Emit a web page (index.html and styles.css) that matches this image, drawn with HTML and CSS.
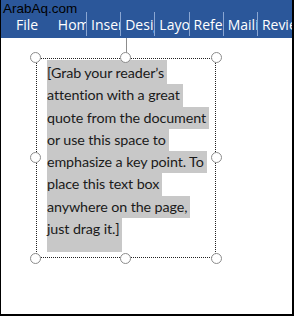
FILE: index.html
```html
<!DOCTYPE html>
<html lang="en">
<head>
    <meta charset="UTF-8">
    <title>Text box</title>
<link rel="stylesheet" href="styles.css">
</head>
<body>
    <div class="frame">
        <!-- Ribbon tabs -->
        <header class="ribbon">
            <div class="watermark">ArabAq.com</div>
            <nav class="tabs">
                <div class="tab file">File</div>
                <div class="tab home">Home</div>
                <div class="tab sep">Insert</div>
                <div class="tab sep">Design</div>
                <div class="tab sep">Layout</div>
                <div class="tab sep">References</div>
                <div class="tab sep">Mailings</div>
                <div class="tab sep last">Review</div>
            </nav>
        </header>
        <!-- Document page -->
        <main class="page">
            <div class="textbox">
                <div class="rotate-line"></div>
                <div class="quote">
                    <span class="start">[Grab your reader’s</span>
                    <span>attention with a great</span>
                    <span>quote from the document</span>
                    <span>or use this space to</span>
                    <span>emphasize a key point. To</span>
                    <span>place this text box</span>
                    <span>anywhere on the page,</span>
                    <span class="end">just drag it.]</span>
                </div>
                <i class="handle tl"></i><i class="handle tc"></i><i class="handle tr"></i>
                <i class="handle ml"></i><i class="handle mr"></i>
                <i class="handle bl"></i><i class="handle bc"></i><i class="handle br"></i>
            </div>
        </main>
    </div>
</body>
</html>
```

FILE: styles.css
```css
 body {
     margin: 0; padding: 0;
     background: #fff;
 }
 .frame {
     width: 294px; height: 316px;
     box-sizing: border-box;
     border-left: 1px solid #000;
     border-right: 2px solid #000;
     border-bottom: 2px solid #000;
     display: flex;
     flex-direction: column;
     overflow: hidden;
 }

 /* Ribbon */
 .ribbon {
     position: relative;
     height: 38px;
     background: #2b579a;
     flex-shrink: 0;
 }
 .watermark {
     position: absolute;
     top: 1px; left: 2px;
     font: 13.5px "Liberation Sans", Arial, sans-serif;
     color: #000;
 }
 .tabs {
     display: flex;
     padding-top: 12px;
 }
 .tab {
     font: 14px "Open Sans", sans-serif;
     color: #fff;
     line-height: 24px;
     padding-top: 1px;
     height: 23px;
     white-space: nowrap;
     overflow: hidden;
 }
 .tab.file { width: 43px; padding-left: 15px; }
 .tab.home { width: 29px; }
 .tab.sep {
     width: 30px;
     padding-left: 4px;
     border-left: 1px solid #8aa6d2;
 }
 .tab.last { width: 31px; }

 /* Page */
 .page {
     flex: 1;
     padding: 20px 0 0 35px;
 }
 .textbox {
     position: relative;
     width: 180px; height: 200px;
     box-sizing: border-box;
     border: 1px dotted #222;
     padding: 1px 0 0 10px;
 }
 .rotate-line {
     position: absolute;
     left: 89px; top: -21px;
     width: 1px; height: 16px;
     background: #8c8c8c;
 }
 .quote {
     display: flex;
     flex-direction: column;
     align-items: flex-start;
     font: 14.3px Lato, sans-serif;
     letter-spacing: -0.1px;
     color: #1a1a1a;
 }
 .quote span {
     line-height: 22.3px;
     background: #c8c8c8;
     padding-right: 3px;
 }
 .quote span.start { padding-top: 2px; }
 .quote span.end { padding: 0 2px 12px 0; }

 .handle {
     position: absolute;
     width: 9px; height: 9px;
     border: 1.6px solid #8c8c8c;
     border-radius: 50%;
     background: #fff;
 }
 .handle.tl { left: -7px; top: -7px; }
 .handle.tc { left: 83px; top: -7px; }
 .handle.tr { right: -7px; top: -7px; }
 .handle.ml { left: -7px; top: 93px; }
 .handle.mr { right: -7px; top: 93px; }
 .handle.bl { left: -7px; bottom: -7px; }
 .handle.bc { left: 83px; bottom: -7px; }
 .handle.br { right: -7px; bottom: -7px; }
```
